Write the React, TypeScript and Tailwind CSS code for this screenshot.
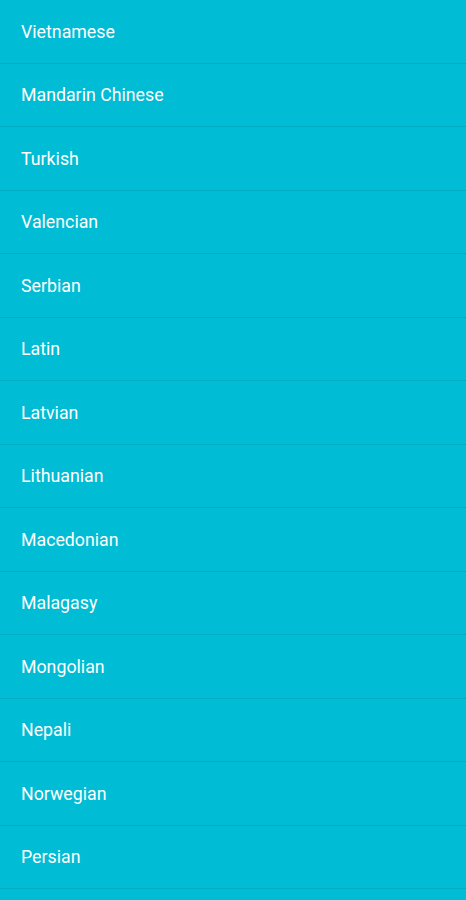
const languages = [
  'Vietnamese',
  'Mandarin Chinese',
  'Turkish',
  'Valencian',
  'Serbian',
  'Latin',
  'Latvian',
  'Lithuanian',
  'Macedonian',
  'Malagasy',
  'Mongolian',
  'Nepali',
  'Norwegian',
  'Persian',
];

export default function App() {
  return (
    <div className="min-h-[900px] w-full bg-[#00bcd4] font-['Roboto',sans-serif]">
      <ul>
        {languages.map((lang) => (
          <li
            key={lang}
            className="flex h-[63.5px] items-center border-b border-[#00acc2] pl-[21px] pt-[2px] text-[17.75px] text-white"
          >
            {lang}
          </li>
        ))}
      </ul>
    </div>
  );
}
